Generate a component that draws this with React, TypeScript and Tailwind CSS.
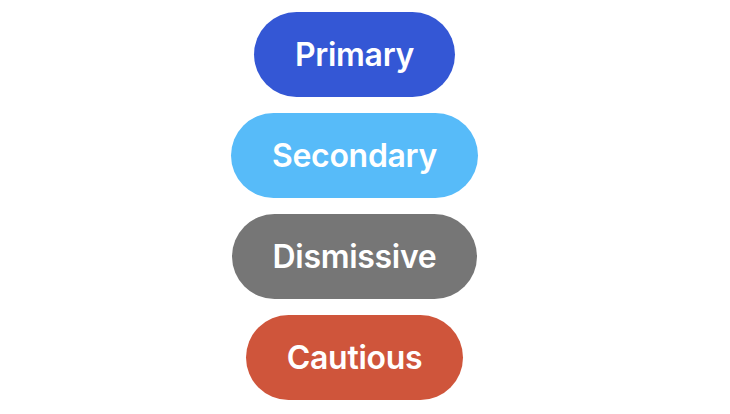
import React from "react";

const buttons = [
  { label: "Primary", cls: "bg-[#3457d5]" },
  { label: "Secondary", cls: "bg-[#57bbf9]" },
  { label: "Dismissive", cls: "bg-[#767676]" },
  { label: "Cautious", cls: "bg-[#cf553b]" },
];

export default function App() {
  return (
    <div className="w-[730px] h-[414px] bg-white flex flex-col items-center gap-[16px] pt-[12px] pr-[21px] font-['Inter','Noto_Sans',sans-serif]">
      {buttons.map((b) => (
        <button
          key={b.label}
          className={`${b.cls} h-[85px] px-[41px] rounded-full text-white text-[32px] font-semibold tracking-[-0.3px]`}
        >
          {b.label}
        </button>
      ))}
    </div>
  );
}
